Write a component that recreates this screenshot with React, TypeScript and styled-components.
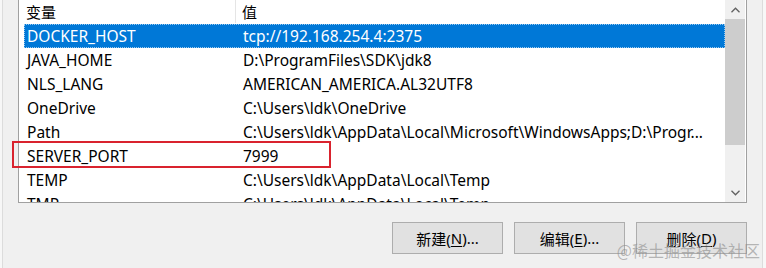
import React from "react";
import styled, { createGlobalStyle } from "styled-components";

const GlobalStyle = createGlobalStyle`
  html, body {
    margin: 0;
    padding: 0;
    background: #f0f0f0;
  }
`;

const font = `"Noto Sans", "Noto Sans CJK SC", sans-serif`;

const Page = styled.div`
  position: relative;
  width: 766px;
  height: 268px;
  box-sizing: border-box;
  padding-left: 2px;
  background: #f7f7f7;
  overflow: hidden;
  font-family: ${font};
  font-size: 15px;
  color: #000;
`;

const Frame = styled.div`
  position: relative;
  height: 100%;
  width: 761px;
  box-sizing: border-box;
  border-left: 1px solid #dcdcdc;
  border-right: 1px solid #dcdcdc;
  background: #f0f0f0;
  padding-left: 15px;
  display: flex;
  flex-direction: column;
`;

const ListBox = styled.div`
  width: 729px;
  height: 203px;
  box-sizing: border-box;
  border: 1px solid #a0a0a0;
  border-top: none;
  background: #fff;
  display: flex;
  overflow: hidden;
`;

const Columns = styled.div`
  width: 706px;
  flex-shrink: 0;
  display: flex;
  flex-direction: column;
  padding-left: 5px;
  box-sizing: border-box;
`;

const Header = styled.div`
  display: flex;
  height: 24px;
  flex-shrink: 0;
`;

const HeaderCell = styled.div<{ $w?: number }>`
  ${({ $w }) => ($w ? `width: ${$w}px; border-right: 1px solid #e5e5e5;` : "flex: 1;")}
  box-sizing: border-box;
  padding-left: ${({ $w }) => ($w ? 2 : 6)}px;
  display: flex;
  align-items: center;
  height: 23px;
`;

const Row = styled.div<{ $selected?: boolean }>`
  display: flex;
  height: 24px;
  flex-shrink: 0;
  box-sizing: border-box;
  align-items: center;
  white-space: nowrap;
  font-size: 15.5px;
  background: ${({ $selected }) => ($selected ? "#0078d7" : "transparent")};
  color: ${({ $selected }) => ($selected ? "#fff" : "#000")};
  border: 1px dotted ${({ $selected }) => ($selected ? "#99c9ef" : "transparent")};
`;

const Cell = styled.div<{ $w?: number }>`
  ${({ $w }) => ($w ? `width: ${$w}px;` : "flex: 1;")}
  padding-left: ${({ $w }) => ($w ? 2 : 6)}px;
  box-sizing: border-box;
  overflow: hidden;
  white-space: nowrap;
`;

/* red annotation drawn over the SERVER_PORT row */
const Highlight = styled.div`
  position: absolute;
  left: 9px;
  top: 141px;
  width: 319px;
  height: 27px;
  border: 2px solid #d9232e;
  box-sizing: border-box;
  pointer-events: none;
`;

const ScrollBar = styled.div`
  width: 20px;
  flex-shrink: 0;
  background: #f0f0f0;
  display: flex;
  flex-direction: column;
  margin-right: 1px;
`;

const ArrowBox = styled.div`
  height: 19px;
  display: flex;
  align-items: center;
  justify-content: center;
`;

const Thumb = styled.div`
  height: 126px;
  background: #cdcdcd;
`;

const Track = styled.div`
  flex: 1;
`;

const ButtonRow = styled.div`
  display: flex;
  justify-content: flex-end;
  gap: 11px;
  width: 729px;
  margin-top: 19px;
`;

const Button = styled.button`
  width: 111px;
  height: 32px;
  box-sizing: border-box;
  background: #e1e1e1;
  border: 1px solid #adadad;
  font-family: ${font};
  font-size: 15px;
  color: #000;
  padding: 0;
  display: flex;
  align-items: center;
  justify-content: center;
`;

const Key = styled.span`
  text-decoration: underline;
  text-underline-offset: 2px;
`;

const Watermark = styled.div`
  position: absolute;
  right: 6px;
  bottom: 6px;
  font-family: "Noto Sans CJK SC", sans-serif;
  font-size: 16px;
  color: rgba(140, 140, 140, 0.6);
  pointer-events: none;
`;

const Chevron = ({ up }: { up?: boolean }) => (
  <svg width="9" height="6" viewBox="0 0 9 6">
    <path
      d={up ? "M0.5 5.2 L4.5 1.2 L8.5 5.2" : "M0.5 0.8 L4.5 4.8 L8.5 0.8"}
      fill="none"
      stroke="#606060"
      strokeWidth="1.3"
    />
  </svg>
);

const vars: [string, string][] = [
  ["DOCKER_HOST", "tcp://192.168.254.4:2375"],
  ["JAVA_HOME", "D:\\ProgramFiles\\SDK\\jdk8"],
  ["NLS_LANG", "AMERICAN_AMERICA.AL32UTF8"],
  ["OneDrive", "C:\\Users\\ldk\\OneDrive"],
  ["Path", "C:\\Users\\ldk\\AppData\\Local\\Microsoft\\WindowsApps;D:\\Progr..."],
  ["SERVER_PORT", "7999"],
  ["TEMP", "C:\\Users\\ldk\\AppData\\Local\\Temp"],
  ["TMP", "C:\\Users\\ldk\\AppData\\Local\\Temp"],
];

export default function App() {
  return (
    <>
      <GlobalStyle />
      <Page>
        <Frame>
          <ListBox>
            <Columns>
              <Header>
                <HeaderCell $w={212}>变量</HeaderCell>
                <HeaderCell>值</HeaderCell>
              </Header>
              {vars.map(([name, value], i) => (
                <Row key={name} $selected={i === 0}>
                  <Cell $w={212}>{name}</Cell>
                  <Cell>{value}</Cell>
                </Row>
              ))}
            </Columns>
            <ScrollBar>
              <ArrowBox>
                <Chevron up />
              </ArrowBox>
              <Thumb />
              <Track />
              <ArrowBox>
                <Chevron />
              </ArrowBox>
            </ScrollBar>
          </ListBox>
          <ButtonRow>
            <Button>
              新建(<Key>N</Key>)...
            </Button>
            <Button>
              编辑(<Key>E</Key>)...
            </Button>
            <Button>
              删除(<Key>D</Key>)
            </Button>
          </ButtonRow>
          <Highlight />
        </Frame>
        <Watermark>@稀土掘金技术社区</Watermark>
      </Page>
    </>
  );
}
